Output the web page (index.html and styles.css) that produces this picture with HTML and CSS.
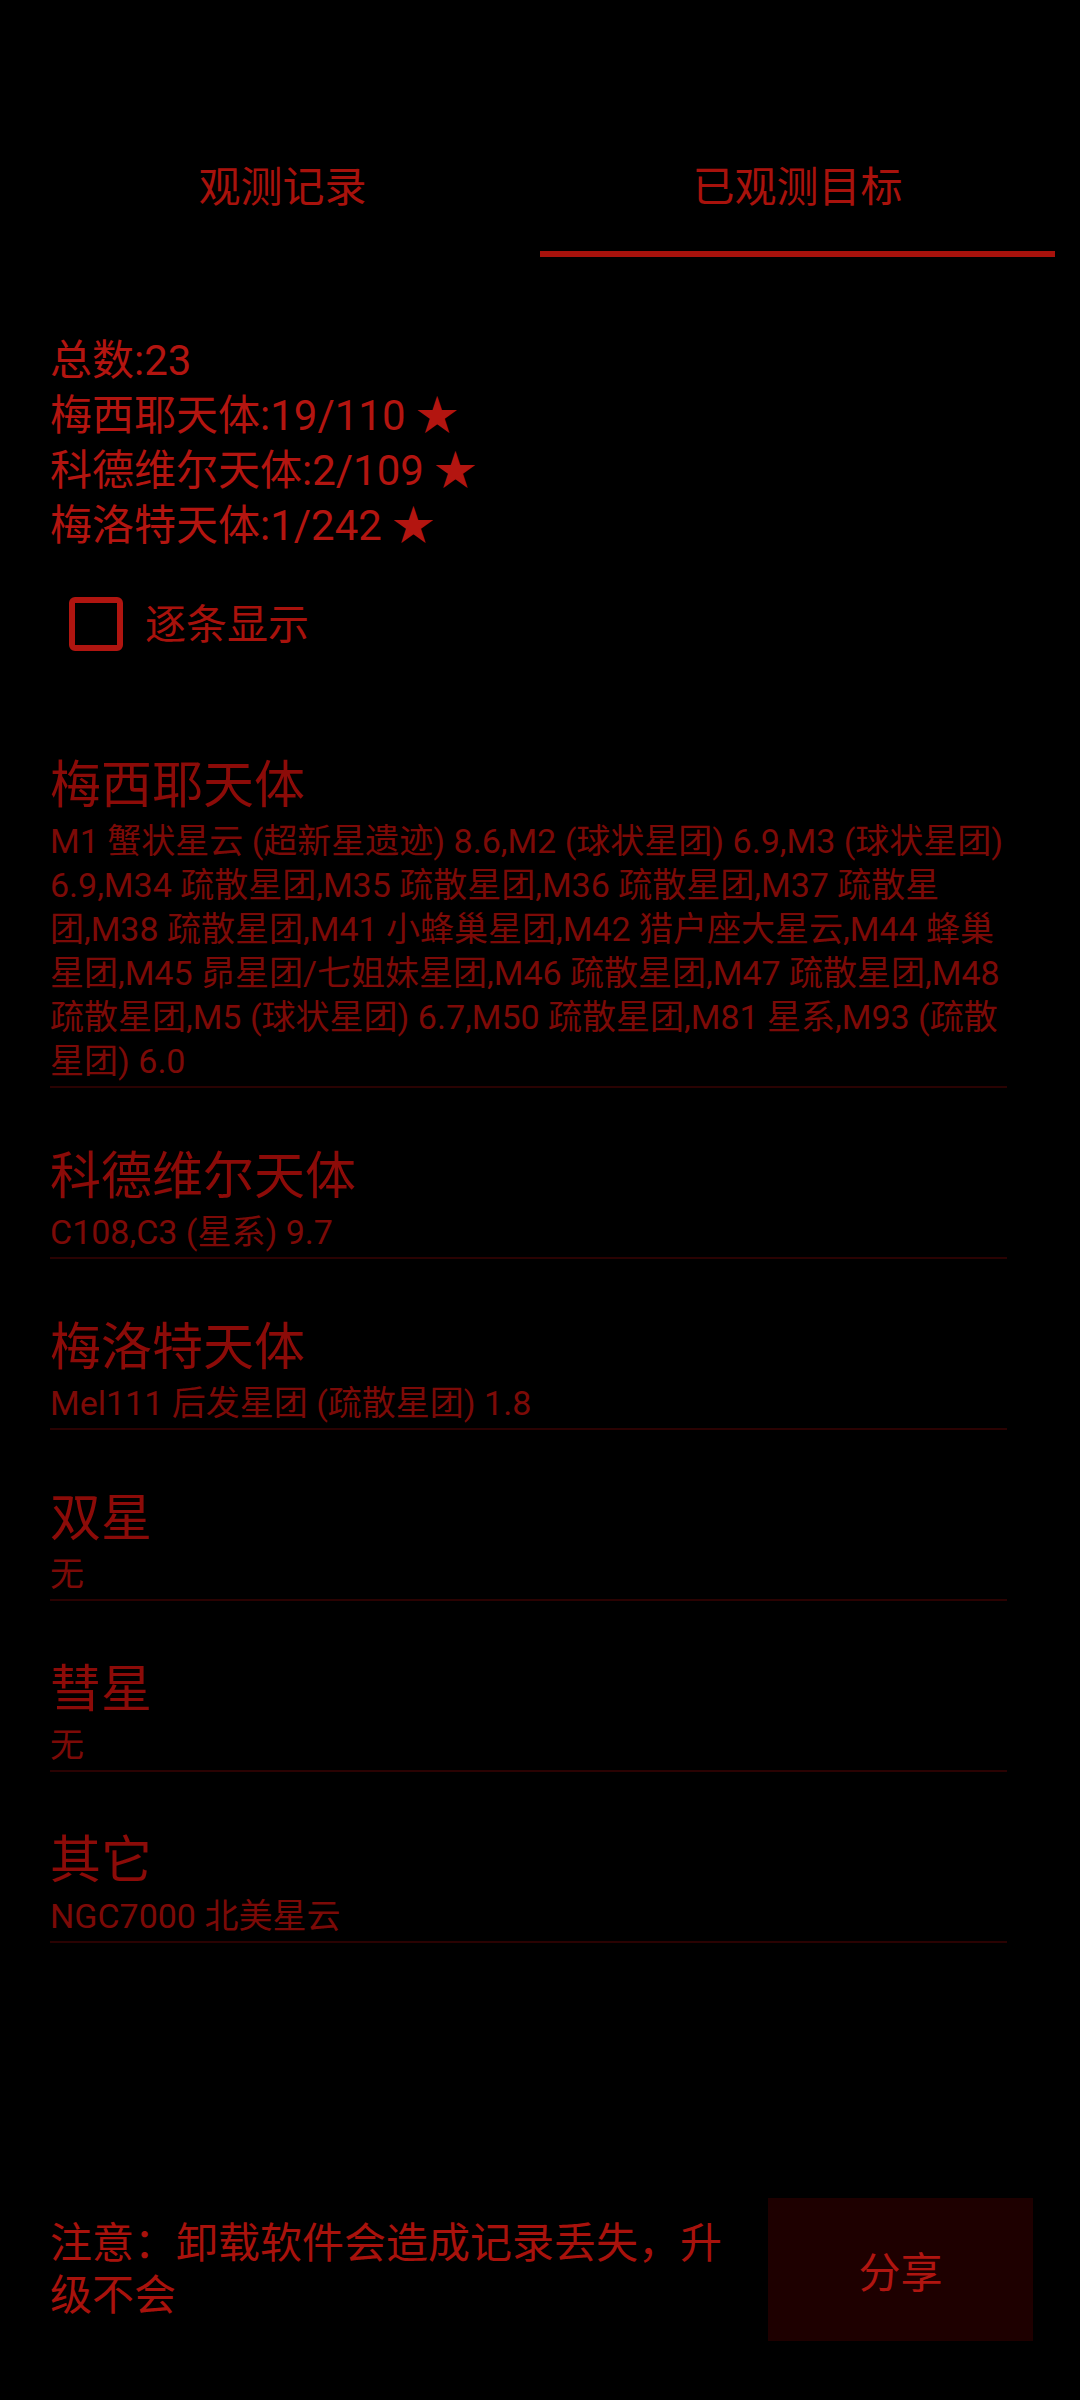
FILE: index.html
```html
<!DOCTYPE html>
<html lang="zh-CN">

<head>
    <meta charset="UTF-8">
    <meta name="viewport" content="width=device-width, initial-scale=1.0">
    <title>已观测目标</title>
    <link rel="stylesheet" href="styles.css">
</head>

<body>
    <div class="tabs">
        <div class="tab">观测记录</div>
        <div class="tab active">已观测目标</div>
    </div>

    <div class="stats">
        <div>总数:23</div>
        <div>梅西耶天体:19/110 ★</div>
        <div>科德维尔天体:2/109 ★</div>
        <div>梅洛特天体:1/242 ★</div>
    </div>

    <label class="toggle">
        <span class="box"></span>
        <span>逐条显示</span>
    </label>

    <div class="list">
        <div class="group">
            <div class="title">梅西耶天体</div>
            <div class="items">M1 蟹状星云 (超新星遗迹) 8.6,M2 (球状星团) 6.9,M3 (球状星团) 6.9,M34 疏散星团,M35 疏散星团,M36 疏散星团,M37 疏散星团,M38 疏散星团,M41 小蜂巢星团,M42 猎户座大星云,M44 蜂巢星团,M45 昴星团/七姐妹星团,M46 疏散星团,M47 疏散星团,M48 疏散星团,M5 (球状星团) 6.7,M50 疏散星团,M81 星系,M93 (疏散星团) 6.0</div>
        </div>
        <div class="group">
            <div class="title">科德维尔天体</div>
            <div class="items">C108,C3 (星系) 9.7</div>
        </div>
        <div class="group">
            <div class="title">梅洛特天体</div>
            <div class="items">Mel111 后发星团 (疏散星团) 1.8</div>
        </div>
        <div class="group">
            <div class="title">双星</div>
            <div class="items">无</div>
        </div>
        <div class="group">
            <div class="title">彗星</div>
            <div class="items">无</div>
        </div>
        <div class="group">
            <div class="title">其它</div>
            <div class="items">NGC7000 北美星云</div>
        </div>
    </div>

    <div class="footer">
        <div class="note">注意：卸载软件会造成记录丢失，升级不会</div>
        <button class="share">分享</button>
    </div>
</body>

</html>
```

FILE: styles.css
```css
html,
body {
    margin: 0;
    height: 100%;
}

body {
    width: 1080px;
    height: 2400px;
    background: #000;
    color: #b01510;
    font-family: Roboto, "Noto Sans CJK SC", sans-serif;
    display: flex;
    flex-direction: column;
}

.tabs {
    display: flex;
    margin: 110px 25px 0;
}

.tab {
    flex: 1;
    height: 147px;
    box-sizing: border-box;
    padding-top: 5px;
    display: flex;
    align-items: center;
    justify-content: center;
    font-size: 42px;
    color: #a8120c;
    border-bottom: 6px solid transparent;
}

.tab.active {
    border-bottom-color: #a8120c;
}

.stats {
    margin-top: 76px;
    padding-left: 50px;
    font-size: 42px;
    line-height: 55px;
    color: #b31510;
}

.toggle {
    display: flex;
    align-items: center;
    margin-top: 44px;
    padding-left: 69px;
    font-size: 41px;
    color: #a8120c;
}

.box {
    width: 54px;
    height: 54px;
    box-sizing: border-box;
    border: 6px solid #b01510;
    border-radius: 6px;
    margin-right: 22px;
}

.toggle span:last-child {
    margin-top: -6px;
}

.list {
    margin: 46px 73px 0 50px;
}

.group {
    margin-top: 56px;
    padding-bottom: 3px;
    border-bottom: 2px solid #2a0202;
}

.title {
    font-size: 51px;
    line-height: 66px;
    color: #8c0b08;
}

.items {
    font-size: 34px;
    line-height: 44px;
    color: #7c0a07;
}

.footer {
    margin-top: auto;
    display: flex;
    align-items: center;
    gap: 28px;
    padding: 0 47px 59px 50px;
}

.note {
    flex: 1;
    font-size: 42px;
    line-height: 52px;
    color: #a8120c;
}

.share {
    width: 265px;
    height: 143px;
    border: none;
    background: #1e0000;
    color: #b01510;
    font-family: inherit;
    font-size: 42px;
}
```
